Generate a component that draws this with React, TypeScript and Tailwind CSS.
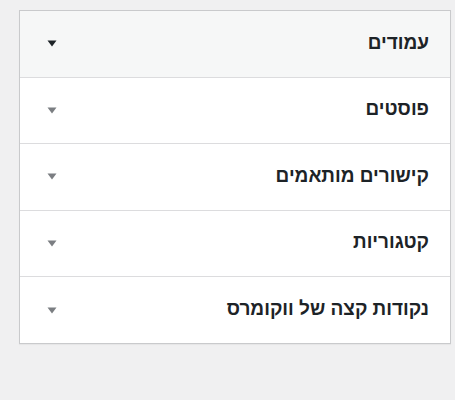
const items = [
  { label: 'עמודים', open: true },
  { label: 'פוסטים', open: false },
  { label: 'קישורים מותאמים', open: false },
  { label: 'קטגוריות', open: false },
  { label: 'נקודות קצה של ווקומרס', open: false },
];

function Arrow({ dark }: { dark: boolean }) {
  return (
    <svg width="10" height="7" viewBox="0 0 10 7" aria-hidden="true">
      <path d="M0.5 0.5 H9.5 L5 6.5 Z" fill={dark ? '#1d2327' : '#7b7e82'} />
    </svg>
  );
}

export default function App() {
  return (
    <div
      dir="rtl"
      className="min-h-[400px] w-[455px] bg-[#f0f0f1] pt-[10px] pl-[19px] pr-[4px]"
      style={{ fontFamily: '"Liberation Sans", Arial, sans-serif' }}
    >
      <div className="border border-[#c9cacc] bg-white shadow-[0_1px_1px_rgba(0,0,0,0.04)]">
        {items.map((item, i) => (
          <button
            key={item.label}
            type="button"
            className={`flex w-full items-center justify-between pr-[21px] pl-[27px] text-right ${
              i > 0 ? 'h-[66.6px] border-t border-[#dcdcde]' : 'h-[65.5px]'
            } ${item.open ? 'bg-[#f6f7f7]' : 'bg-white'}`}
          >
            <span className="pb-[2px] text-[19px] font-bold text-[#1d2327]">{item.label}</span>
            <Arrow dark={item.open} />
          </button>
        ))}
      </div>
    </div>
  );
}
